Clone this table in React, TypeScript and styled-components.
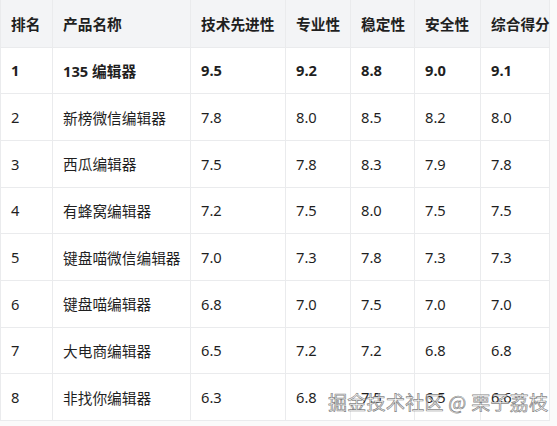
import React from "react";
import styled, { createGlobalStyle } from "styled-components";

const GlobalStyle = createGlobalStyle`
  body {
    margin: 0;
    background: #fafafa;
    font-family: "Noto Sans", "Noto Sans CJK SC", sans-serif;
    color: #1f1f1f;
  }
`;

const Wrapper = styled.div`
  position: relative;
  width: 557px;
  height: 426px;
  overflow: hidden;
  background: #fafafa;
`;

const Table = styled.table`
  width: 549px;
  border-collapse: collapse;
  table-layout: fixed;
  background: #ffffff;
  font-size: 14.7px;
`;

const HeadCell = styled.th<{ w: number }>`
  width: ${(p) => p.w}px;
  height: 47px;
  padding: 0 0 0 10px;
  text-align: left;
  font-weight: 700;
  background: #f3f4f6;
  border: 1px solid #eaebed;
  border-top: none;
  white-space: nowrap;
  box-sizing: border-box;
`;

const Cell = styled.td<{ bold?: boolean }>`
  height: 46.7px;
  padding: 0 0 0 10px;
  font-weight: ${(p) => (p.bold ? 700 : 400)};
  border: 1px solid #eaebed;
  white-space: nowrap;
  box-sizing: border-box;
`;

const Watermark = styled.div`
  position: absolute;
  left: 328px;
  top: 388px;
  font-size: 19px;
  letter-spacing: 0.3px;
  white-space: nowrap;
  color: rgba(250, 250, 250, 0.85);
  -webkit-text-stroke: 0.7px rgba(90, 90, 90, 0.75);
  font-family: "Noto Sans CJK SC", sans-serif;
`;

const columns = [
  { title: "排名", w: 52 },
  { title: "产品名称", w: 138 },
  { title: "技术先进性", w: 95 },
  { title: "专业性", w: 65 },
  { title: "稳定性", w: 64 },
  { title: "安全性", w: 66 },
  { title: "综合得分", w: 69 },
];

const rows = [
  ["1", "135 编辑器", "9.5", "9.2", "8.8", "9.0", "9.1"],
  ["2", "新榜微信编辑器", "7.8", "8.0", "8.5", "8.2", "8.0"],
  ["3", "西瓜编辑器", "7.5", "7.8", "8.3", "7.9", "7.8"],
  ["4", "有蜂窝编辑器", "7.2", "7.5", "8.0", "7.5", "7.5"],
  ["5", "键盘喵微信编辑器", "7.0", "7.3", "7.8", "7.3", "7.3"],
  ["6", "键盘喵编辑器", "6.8", "7.0", "7.5", "7.0", "7.0"],
  ["7", "大电商编辑器", "6.5", "7.2", "7.2", "6.8", "6.8"],
  ["8", "非找你编辑器", "6.3", "6.8", "7.5", "6.5", "6.6"],
];

function App() {
  return (
    <Wrapper>
      <GlobalStyle />
      <Table>
        <thead>
          <tr>
            {columns.map((c) => (
              <HeadCell key={c.title} w={c.w}>
                {c.title}
              </HeadCell>
            ))}
          </tr>
        </thead>
        <tbody>
          {rows.map((r, i) => (
            <tr key={r[0]}>
              {r.map((v, j) => (
                <Cell key={j} bold={i === 0}>
                  {v}
                </Cell>
              ))}
            </tr>
          ))}
        </tbody>
      </Table>
      <Watermark>掘金技术社区 @ 栗子荔枝</Watermark>
    </Wrapper>
  );
}

export default App;
